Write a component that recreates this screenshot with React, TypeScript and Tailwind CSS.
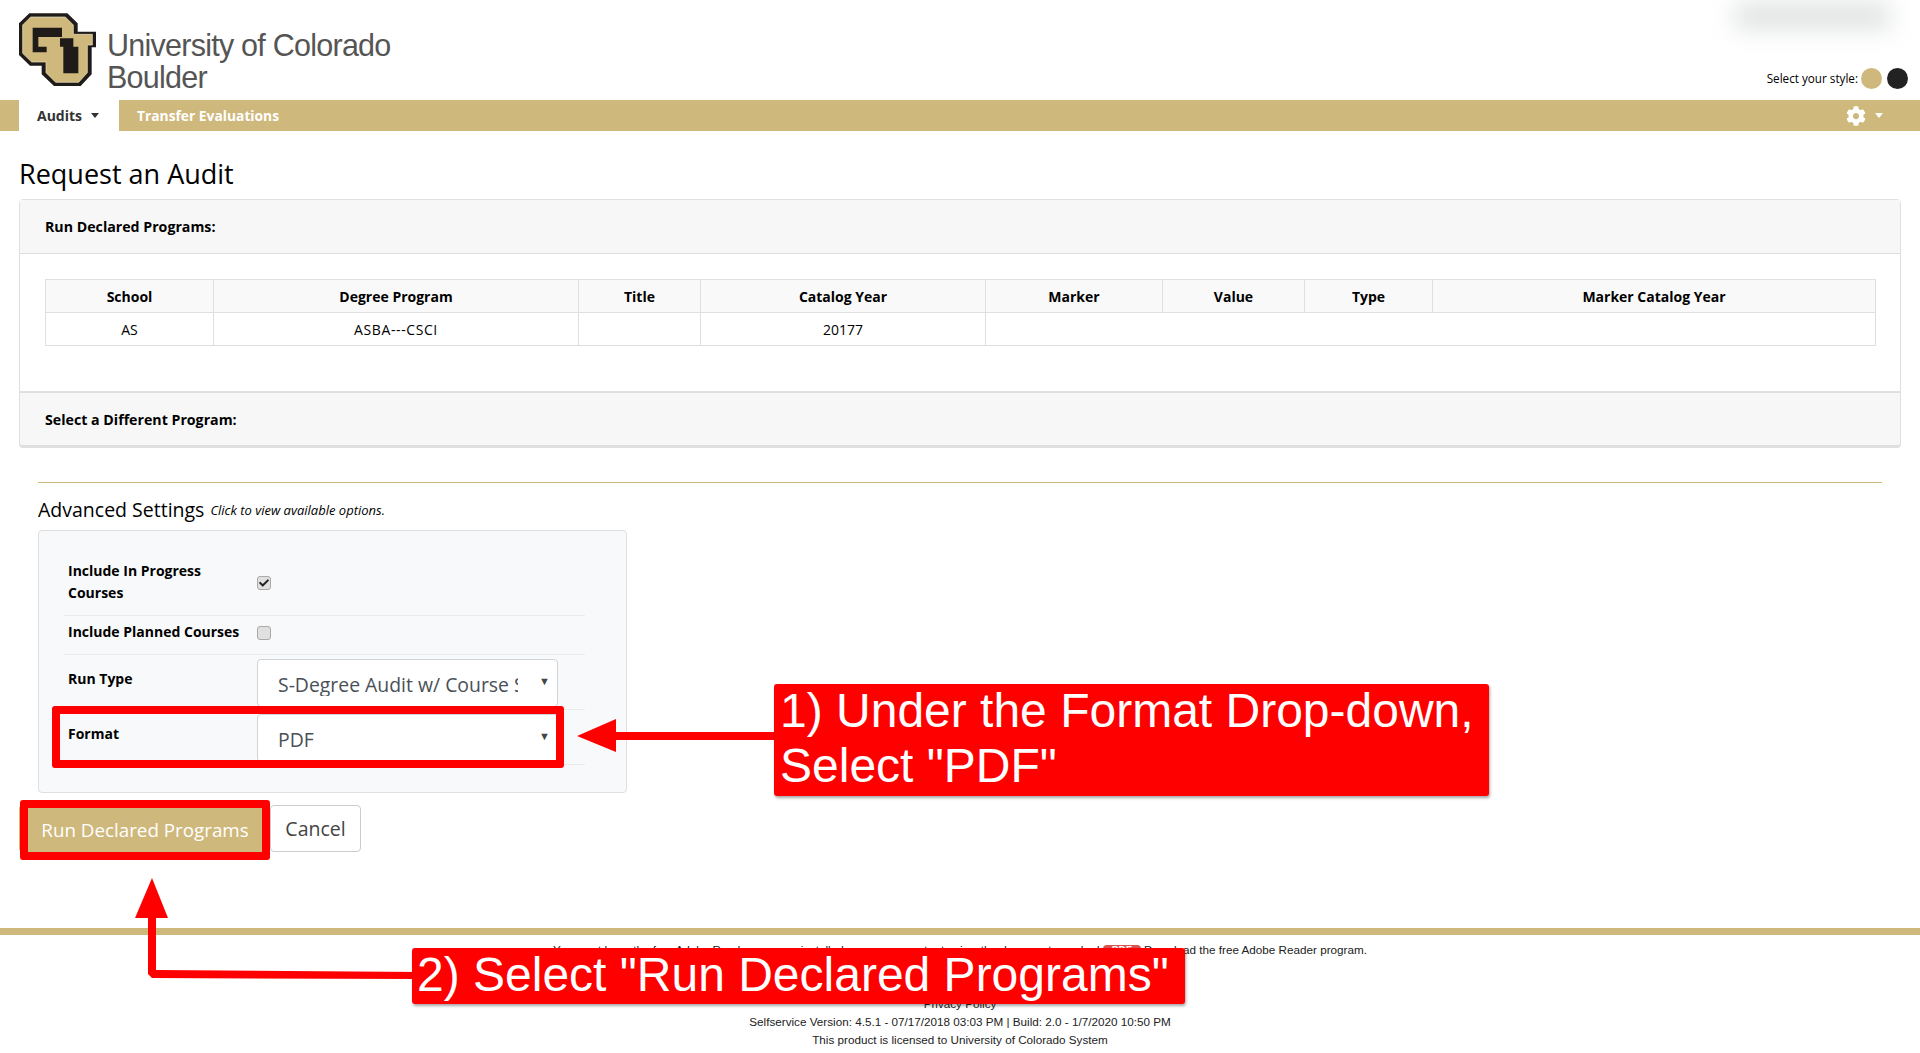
import { FaCheck, FaCog } from 'react-icons/fa';

const columns = [
    { name: 'School', width: 'w-[168px]' },
    { name: 'Degree Program', width: 'w-[365px]' },
    { name: 'Title', width: 'w-[122px]' },
    { name: 'Catalog Year', width: 'w-[285px]' },
    { name: 'Marker', width: 'w-[177px]' },
    { name: 'Value', width: 'w-[142px]' },
    { name: 'Type', width: 'w-[128px]' },
    { name: 'Marker Catalog Year', width: 'w-[443px]' },
];

function CuLogo() {
    return (
        <svg width="96" height="90" viewBox="0 0 288 270" className="shrink-0">
            <polygon points="58,25 172,25 203,55 203,80 258,80 258,127 245,127 245,208 212,243 132,243 95,208 95,182 60,182 27,150 27,55" fill="#1f1b18" />
            <polygon points="62,36 166,36 190,60 190,88 247,88 247,120 232,120 232,203 206,232 137,232 108,203 108,171 65,171 38,145 38,60" fill="#cfb87c" stroke="#efe6c8" strokeWidth="2" />
            <polygon points="68,68 156,68 156,96 85,96 85,125 110,125 110,142 68,142" fill="#1f1b18" />
            <polygon points="150,100 190,100 190,125 205,125 205,205 160,205 160,125 150,125" fill="#1f1b18" />
        </svg>
    );
}

function Checkbox({ checked }: { checked?: boolean }) {
    return (
        <span className="flex h-[14px] w-[14px] items-center justify-center rounded-[3px] border border-[#a9a9a9] bg-[#e0e0e0]">
            {checked && <FaCheck className="text-[10px] text-[#222]" />}
        </span>
    );
}

function FakeSelect({ value }: { value: string }) {
    return (
        <div className="flex h-[48px] w-[301px] items-center rounded-[4px] border border-[#ced4da] bg-white pl-[20px] pr-[7px] pt-[4px] text-[19.4px] font-normal text-[#495057]">
            <span className="w-[240px] overflow-hidden whitespace-nowrap">{value}</span>
            <span className="ml-auto -mt-[8px] text-[11px] text-[#444]">▼</span>
        </div>
    );
}

function App() {
    return (
        <div className="relative h-[1053px] w-full overflow-hidden bg-white font-['Open_Sans',sans-serif] text-black">
            {/* header */}
            <div className="flex h-[100px] justify-between">
                <div className="ml-[10px] mt-[5px] flex items-start">
                    <CuLogo />
                    <div className="ml-[1px] mt-[24px] font-['Liberation_Sans',sans-serif] text-[30.5px] leading-[32px] tracking-[-0.75px] text-[#555]">
                        <div>University of Colorado</div>
                        <div>Boulder</div>
                    </div>
                </div>
                <div className="flex flex-col items-end justify-between pb-[11px] pr-[12px]">
                    <div className="mr-[18px] mt-[3px] h-[26px] w-[155px] bg-[#dfe1e1] blur-md" />
                    <div className="flex items-center text-[11.7px]">
                        <span>Select your style:</span>
                        <span className="ml-[3px] h-[21px] w-[21px] rounded-full bg-[#cfb87c]" />
                        <span className="ml-[5px] h-[21px] w-[21px] rounded-full bg-[#222]" />
                    </div>
                </div>
            </div>

            {/* nav */}
            <div className="flex h-[31px] items-center bg-[#cfb87c] pl-[19px] text-[14px] font-bold">
                <div className="flex h-full w-[100px] items-center bg-white pl-[18px] text-[#333]">
                    Audits
                    <span className="ml-[9px] h-0 w-0 border-x-[4.5px] border-t-[5px] border-x-transparent border-t-[#333]" />
                </div>
                <div className="ml-[18px] pt-[1px] text-[13.8px] text-white">Transfer Evaluations</div>
                <div className="ml-auto flex items-center pr-[37px] text-white">
                    <FaCog className="text-[20px]" />
                    <span className="ml-[9px] h-0 w-0 border-x-[4.5px] border-t-[5px] border-x-transparent border-t-white" />
                </div>
            </div>

            {/* main */}
            <div className="px-[19px]">
                <h1 className="flex h-[68px] items-center pt-[18px] text-[27px] font-medium">Request an Audit</h1>

                <div className="h-[193px] rounded-t-[4px] border border-[#dfdfdf]">
                    <div className="flex h-[54px] items-center border-b border-[#dfdfdf] bg-[#f7f7f7] pl-[25px] pt-[1px] text-[14.2px] font-bold">
                        Run Declared Programs:
                    </div>
                    <div className="px-[25px] pt-[25px]">
                        <table className="w-[1830px] table-fixed border-collapse text-center text-[14px]">
                            <thead>
                                <tr className="h-[33px] bg-[#f9f9f9]">
                                    {columns.map((col) => (
                                        <th key={col.name} className={`${col.width} border border-[#dfdfdf] font-bold`}>
                                            {col.name}
                                        </th>
                                    ))}
                                </tr>
                            </thead>
                            <tbody>
                                <tr className="h-[33px]">
                                    <td className="border border-[#dfdfdf]">AS</td>
                                    <td className="border border-[#dfdfdf] tracking-[0.6px]">ASBA---CSCI</td>
                                    <td className="border border-[#dfdfdf]"></td>
                                    <td className="border border-[#dfdfdf]">20177</td>
                                    <td colSpan={4} className="border border-[#dfdfdf]"></td>
                                </tr>
                            </tbody>
                        </table>
                    </div>
                </div>

                <div className="flex h-[56px] items-center rounded-b-[4px] border border-b-[3px] border-[#dfdfdf] bg-[#f7f7f7] pl-[25px] pt-[2px] text-[14.2px] font-bold">
                    Select a Different Program:
                </div>

                <div className="mx-[19px] mt-[34px] border-t border-[#cfb87c]" />

                <div className="ml-[19px] flex h-[47px] items-center gap-[6px] pt-[6px]">
                    <span className="text-[19.5px]">Advanced Settings</span>
                    <span className="mt-[3px] text-[13px] italic">Click to view available options.</span>
                </div>

                <div className="ml-[19px] h-[263px] w-[589px] rounded-[4px] border border-[#dfdfdf] bg-[#f8f9fa] pl-[25px] pr-[41px] pt-[29px] text-[14px] font-bold leading-[22px]">
                    <div className="flex h-[56px] items-start border-b border-[#ebebeb] pl-[4px]">
                        <div className="w-[189px]">
                            Include In Progress
                            <br />
                            Courses
                        </div>
                        <div className="pt-[16px]">
                            <Checkbox checked />
                        </div>
                    </div>
                    <div className="flex h-[39px] items-start border-b border-[#ebebeb] pl-[4px]">
                        <div className="w-[189px] pt-[5px]">Include Planned Courses</div>
                        <div className="pt-[10px]">
                            <Checkbox />
                        </div>
                    </div>
                    <div className="flex h-[55px] items-start border-b border-[#ebebeb] pl-[4px] pt-[4px]">
                        <div className="w-[189px] pt-[9px]">Run Type</div>
                        <FakeSelect value="S-Degree Audit w/ Course Summary" />
                    </div>
                    <div className="flex h-[55px] items-start border-b border-[#ebebeb] pl-[4px] pt-[4px]">
                        <div className="w-[189px] pt-[9px]">Format</div>
                        <FakeSelect value="PDF" />
                    </div>
                </div>

                <div className="mt-[12px] flex gap-[3px]">
                    <button className="h-[47px] w-[248px] rounded-[4px] bg-[#cfb87c] pl-[4px] pt-[3px] text-[18.8px] text-white">
                        Run Declared Programs
                    </button>
                    <button className="h-[47px] w-[91px] rounded-[4px] border border-[#cccccc] bg-white text-[19.5px] text-[#444]">
                        Cancel
                    </button>
                </div>
            </div>

            {/* footer */}
            <div className="mt-[76px] border-t-[7px] border-[#cfb87c] pt-[8px] text-center font-['Liberation_Sans',sans-serif] text-[11.7px] leading-[14px] text-[#222]">
                <div>
                    You must have the free Adobe Reader program installed on your computer to view the documents marked{' '}
                    <span className="rounded-[4px] bg-[#d9534f] px-[9px] text-[10px] font-bold text-white">PDF</span>{' '}
                    Download the free Adobe Reader program.
                </div>
                <div className="mt-[39px]">Privacy Policy</div>
                <div className="mt-[4px]">Selfservice Version: 4.5.1 - 07/17/2018 03:03 PM | Build: 2.0 - 1/7/2020 10:50 PM</div>
                <div className="mt-[4px]">This product is licensed to University of Colorado System</div>
            </div>

            {/* annotations on top of the screenshot */}
            <div className="absolute left-[52px] top-[706px] h-[62px] w-[512px] rounded-[3px] border-[8px] border-[#ff0000]" />
            <div className="absolute left-[20px] top-[800px] h-[60px] w-[250px] rounded-[3px] border-[8px] border-[#ff0000]" />

            <svg className="absolute left-0 top-0" width="1920" height="1053">
                <polygon points="577,736 616,719 616,732 780,732 780,740 616,740 616,752" fill="#ff0000" />
                <polygon points="152,878 168,918 156,918 156,970 420,972 420,979 152,978 148,974 148,918 135,918" fill="#ff0000" />
            </svg>

            <div className="absolute left-[774px] top-[684px] h-[112px] w-[715px] rounded-[3px] bg-[#ff0000] pl-[6px] font-['Liberation_Sans',sans-serif] text-[48px] leading-[55px] text-white shadow-[1px_2px_3px_rgba(0,0,0,0.35)]">
                <div className="-mt-[1px]">
                    1) Under the Format Drop-down,
                    <br />
                    Select "PDF"
                </div>
            </div>
            <div className="absolute left-[412px] top-[948px] h-[56px] w-[773px] whitespace-nowrap rounded-[3px] bg-[#ff0000] pl-[5px] font-['Liberation_Sans',sans-serif] text-[48px] leading-[55px] text-white shadow-[1px_2px_3px_rgba(0,0,0,0.35)]">
                <div className="-mt-[1px]">2) Select "Run Declared Programs"</div>
            </div>
        </div>
    );
}

export default App;
